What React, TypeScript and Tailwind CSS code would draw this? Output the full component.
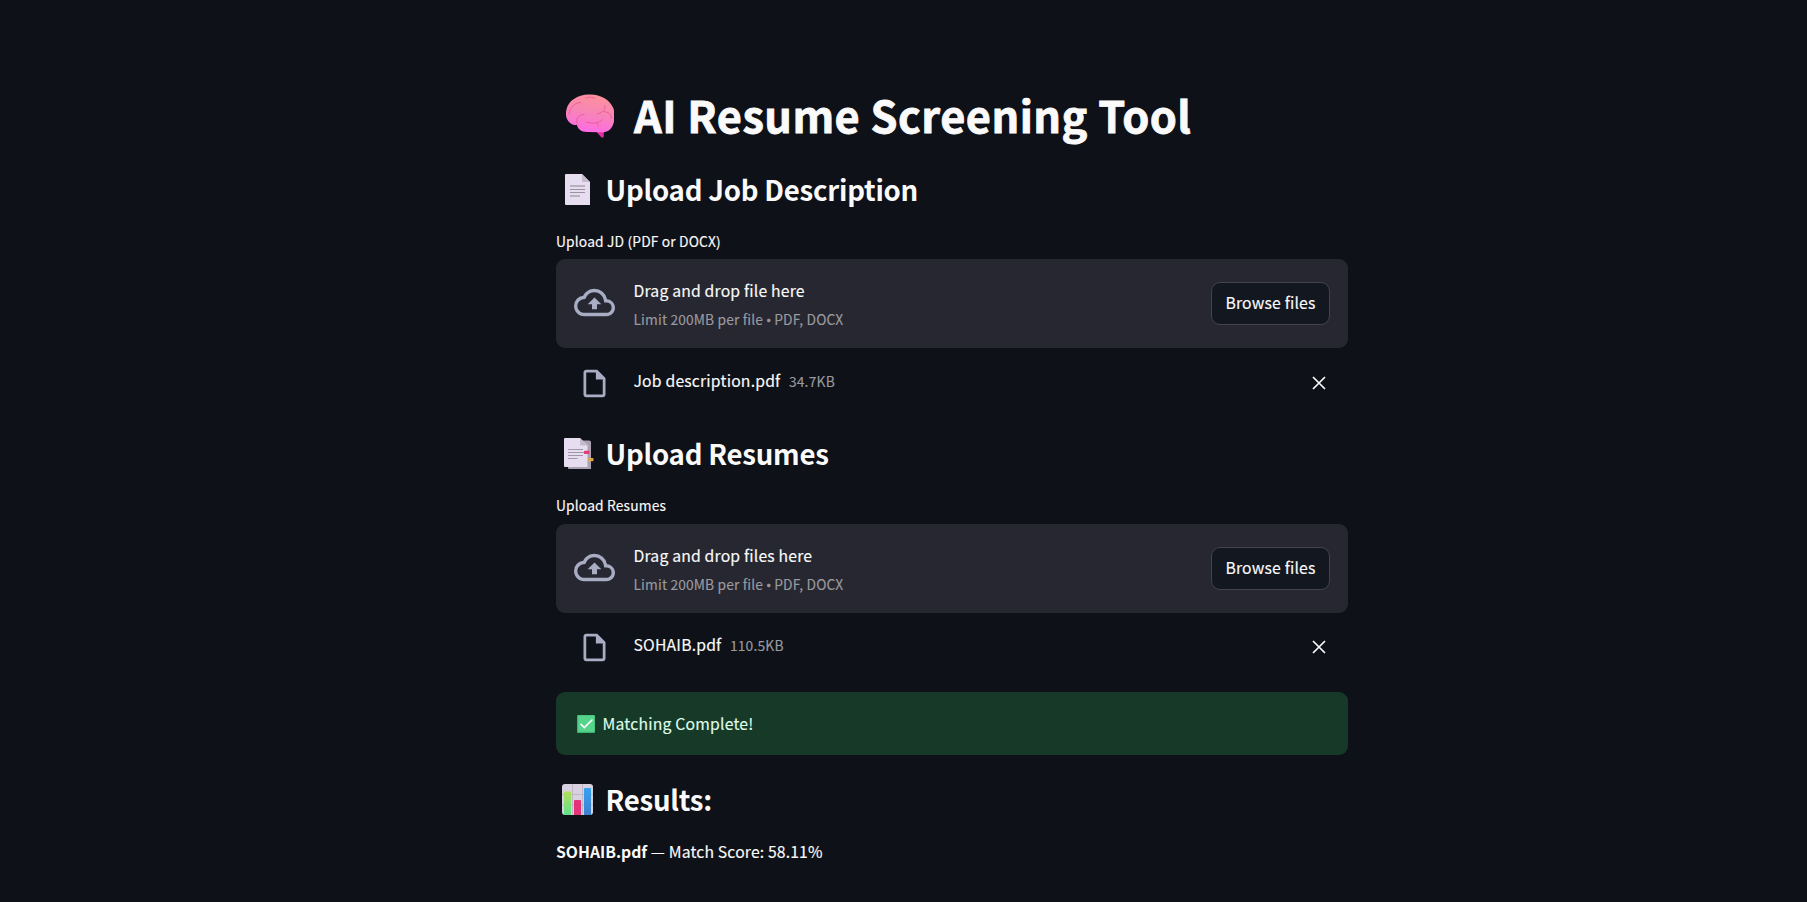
import React from "react";

const Brain = () => (
  <svg viewBox="0 0 48 44" className="h-[44px] w-[48px]">
    <defs>
      <linearGradient id="brain" x1="0.6" y1="0" x2="0.4" y2="1">
        <stop offset="0" stopColor="#ff929b" />
        <stop offset="0.5" stopColor="#f784b8" />
        <stop offset="1" stopColor="#ff6ae6" />
      </linearGradient>
    </defs>
    <path d="M30 37 L38 37 L37.6 43.5 L35.5 43.5 L31 38.500Z" fill="#e42fa4" />
    <path d="M23 .5C34 0 44 5.500 47.500 14.500C49 20 49 27 46.500 32C44 37 40 38.500 35 38.300L21 38C15 38 11.500 34.500 11 31C6 31.500 1 28 0 21.500C-.5 14 3 8 8 5C12 2 17 .7 23 .5Z" fill="url(#brain)" />
    <g fill="none" stroke="#e8588f" strokeWidth="1" strokeLinecap="round" strokeOpacity=".85">
      <path d="M3 20C4 13 9 8.500 14.500 8.500" />
      <path d="M20 4C24 2.500 27 3 29 4.500" />
      <path d="M39 11.500C39.500 16 37 18.500 31 20M38 17.500C42 18 45 20 45.500 24" />
      <path d="M11 30C10 25 12 20.500 18 20.500" />
      <path d="M20 28C26 30 33 29.500 36.500 25.500M31 29L32.500 32.500" />
    </g>
  </svg>
);

const Page = () => (
  <svg viewBox="0 0 25 31" className="ml-[9px] h-[31px] w-[25px]">
    <path d="M1 0H17L25 8V31H1Q0 31 0 30V1Q0 0 1 0Z" fill="#e6def0" />
    <path d="M17 0L25 8H18Q17 8 17 7Z" fill="#c4bccb" />
    <path d="M5 12H20M5 22H15" stroke="#b9b1c0" strokeWidth="2" />
    <path d="M5 15.500H20M5 18.500H20" stroke="#9a92a2" strokeWidth="1" />
  </svg>
);

const Tabs = () => (
  <svg viewBox="0 0 30 31" className="ml-[8px] h-[31px] w-[30px]">
    <path d="M4 2.500H25Q27 2.500 27 4V31H5Q4 31 4 30Z" fill="#aaa2b1" />
    <path d="M1 0H16L23.500 7.500V29H1Q0 29 0 28V1Q0 0 1 0Z" fill="#e6def0" />
    <path d="M16 0L23.500 7.500H17Q16 7.500 16 6.500Z" fill="#c4bccb" />
    <path d="M4 11.500H19M4 14.500H20M4 17.500H19M4 20.500H13.500" stroke="#a097a8" strokeWidth="1.100" />
    <rect x="20" y="12.700" width="5.500" height="3.300" rx=".7" fill="#e43c78" />
    <rect x="24" y="20" width="5.500" height="3.300" rx=".7" fill="#dca945" />
  </svg>
);

const Chart = () => (
  <svg viewBox="0 0 31 31" className="ml-[6px] h-[31px] w-[31px]">
    <defs>
      <linearGradient id="green" x1="0" y1="0" x2="0" y2="1">
        <stop offset="0" stopColor="#b2df57" />
        <stop offset="1" stopColor="#5fe08e" />
      </linearGradient>
      <linearGradient id="blue" x1="0" y1="0" x2="0" y2="1">
        <stop offset="0" stopColor="#35a2f3" />
        <stop offset="1" stopColor="#3f7fd0" />
      </linearGradient>
    </defs>
    <rect width="31" height="31" rx="3" fill="#d9d1df" />
    <path d="M0 10.500H31M0 21H31M10.500 0V31M20.500 0V31" stroke="#bfb7c6" strokeWidth="1" />
    <path d="M2 31V8.500Q2 7.500 3 7.500H8Q9 7.500 9 8.500V31Z" fill="url(#green)" />
    <path d="M12 31V17Q12 16 13 16H18Q19 16 19 17V31Z" fill="#e5337a" />
    <path d="M22 31V5Q22 4 23 4H28Q29 4 29 5V31Z" fill="url(#blue)" />
  </svg>
);

const Check = () => (
  <svg viewBox="0 0 18 18" className="h-[18px] w-[18px]">
    <rect width="18" height="18" rx="1" fill="#3cb673" />
    <rect x="1.200" y=".5" width="16.300" height="16.300" rx="1" fill="#57d48c" />
    <path d="M4 9.300L7.300 12.600L15 5" fill="none" stroke="#fff" strokeWidth="1.600" strokeLinecap="round" />
  </svg>
);

const Heading = ({ icon, children }: { icon: React.ReactNode; children: React.ReactNode }) => (
  <h2 className="flex h-[37px] items-center text-[27.600px] leading-[37px] font-semibold tracking-[-0.23px] whitespace-nowrap">
    <span className="flex w-[49.500px] shrink-0">{icon}</span>
    <span>{children}</span>
  </h2>
);

type UploaderProps = {
  label: string;
  prompt: string;
  file: string;
  size: string;
  labelClass: string;
  rowClass: string;
};

const Uploader = ({ label, prompt, file, size, labelClass, rowClass }: UploaderProps) => (
  <section className="[-webkit-text-stroke-width:0.15px]">
    <label className={`block text-[13.800px] leading-[20px] tracking-[0.15px] ${labelClass}`}>{label}</label>
    <div className="flex h-[89px] items-center rounded-[9px] bg-[#262730] px-[18px]">
      <svg viewBox="0 0 24 24" className="mr-[18.500px] mb-[2px] h-[41px] w-[41px] shrink-0" fill="#a8adc3">
        <path d="M19.350 10.040A7.490 7.490 0 0 0 12 4C9.110 4 6.600 5.640 5.350 8.040A5.994 5.994 0 0 0 0 14c0 3.310 2.690 6 6 6h13c2.760 0 5-2.240 5-5 0-2.640-2.050-4.780-4.650-4.960zM19 18H6c-2.210 0-4-1.790-4-4 0-2.050 1.530-3.760 3.560-3.970l1.070-.11.5-.95A5.469 5.469 0 0 1 12 6c2.620 0 4.880 1.860 5.390 4.430l.3 1.500 1.530.11A2.980 2.980 0 0 1 22 15c0 1.650-1.350 3-3 3zM8 13h2.550v3h2.900v-3H16l-4-4z" />
      </svg>
      <div className="flex-1 pt-[1px]">
        <div className="text-[15.760px] leading-[28px] tracking-[0.17px]">{prompt}</div>
        <div className="mt-[2px] text-[13.800px] leading-[24px] tracking-[0.13px] text-[#9a9a9f]">
          Limit 200MB per file <span className="font-['Open_Sans',sans-serif] text-[13px] tracking-[-0.2px] [-webkit-text-stroke-width:0.6px]">•</span> PDF, DOCX
        </div>
      </div>
      <button className="h-[43px] w-[119px] rounded-[9px] border border-[#41444c] bg-[#131720] pb-[2px] text-[15.760px] leading-[28px] tracking-[0.17px]">
        Browse files
      </button>
    </div>
    <div className={`flex h-[36px] items-center pl-[22px] ${rowClass}`}>
      <svg viewBox="0 0 24 24" className="mt-px mr-[22.500px] h-[33px] w-[33px] shrink-0" fill="#a8adc3">
        <path d="M14 2H6c-1.100 0-2 .9-2 2v16c0 1.100.9 2 2 2h12c1.100 0 2-.9 2-2V8l-6-6zM6 20V4h7v5h5v11H6z" />
      </svg>
      <span className="pb-[4px] text-[15.760px] leading-[28px] tracking-[0.18px]">{file}</span>
      <span className="ml-[8.500px] pb-[4px] text-[13.800px] leading-[28px] tracking-[0.2px] text-[#9a9a9f]">{size}</span>
      <svg viewBox="0 0 14 14" className="mr-[22px] ml-auto h-[14px] w-[14px]" fill="none" stroke="#fafafa" strokeWidth="1.700">
        <path d="M1 1L13 13M13 1L1 13" />
      </svg>
    </div>
  </section>
);

export default function App() {
  return (
    <main className="flex h-[902px] w-full justify-center overflow-hidden bg-[#0e1117] pl-[97px] font-['Noto_Sans_CJK_SC',sans-serif] text-[#fafafa]">
      <div className="flex w-[792px] flex-col pt-[85px]">
        <h1 className="flex h-[58px] items-center text-[43.300px] leading-[58px] font-bold tracking-[0.480px] whitespace-nowrap [-webkit-text-stroke:0.8px_#fafafa]">
          <span className="flex w-[78px] shrink-0 pt-[4px] pl-[10px]"><Brain /></span>
          <span>AI Resume Screening Tool</span>
        </h1>
        <div className="mt-[28px]">
          <Heading icon={<Page />}>Upload Job Description</Heading>
        </div>
        <div className="mt-[23px]">
          <Uploader
            label="Upload JD (PDF or DOCX)"
            prompt="Drag and drop file here"
            file="Job description.pdf"
            size="34.7KB"
            labelClass="h-[28px]"
            rowClass="mt-[17px]"
          />
        </div>
        <div className="mt-[34px]">
          <Heading icon={<Tabs />}>Upload Resumes</Heading>
        </div>
        <div className="mt-[23px]">
          <Uploader
            label="Upload Resumes"
            prompt="Drag and drop files here"
            file="SOHAIB.pdf"
            size="110.5KB"
            labelClass="h-[29px]"
            rowClass="mt-[16px]"
          />
        </div>
        <div className="mt-[27px] flex h-[63px] items-center rounded-[9px] bg-[#173928] pl-[21px] text-[15.760px] tracking-[0.19px] text-[#dffde9] [-webkit-text-stroke-width:0.15px]">
          <Check />
          <span className="ml-[7.500px]">Matching Complete!</span>
        </div>
        <div className="mt-[26px]">
          <Heading icon={<Chart />}>Results:</Heading>
        </div>
        <p className="mt-[20px] text-[15.760px] leading-[28px] tracking-[0.14px] [-webkit-text-stroke-width:0.15px]">
          <strong className="font-semibold tracking-[0px] [-webkit-text-stroke-width:0px]">SOHAIB.pdf</strong> — Match Score: 58.11%
        </p>
      </div>
    </main>
  );
}
